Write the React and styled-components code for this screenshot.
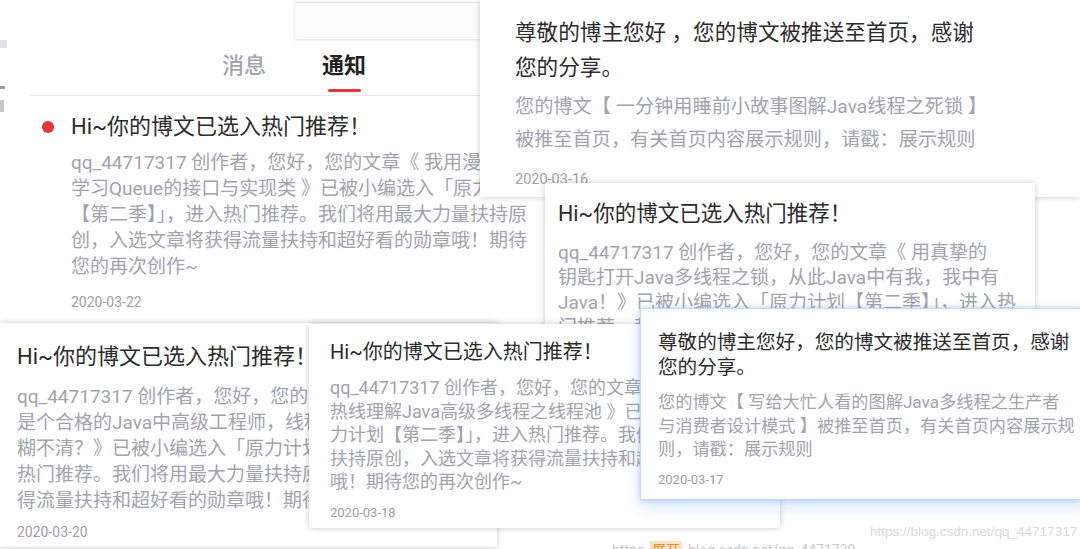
import React from 'react';
import styled, { createGlobalStyle } from 'styled-components';

const GlobalStyle = createGlobalStyle`
  html, body {
    margin: 0;
    padding: 0;
    background: #fff;
  }
  body {
    font-family: Roboto, "Noto Sans CJK SC", "Noto Sans", sans-serif;
    -webkit-font-smoothing: antialiased;
  }
`;

const Canvas = styled.div`
  position: relative;
  width: 1080px;
  height: 549px;
  overflow: hidden;
  background: #fff;
`;

// each screenshot piece sits at its own spot in the collage
const Card = styled.div`
  position: absolute;
  left: ${(p) => p.$x}px;
  top: ${(p) => p.$y}px;
  width: ${(p) => p.$w}px;
  height: ${(p) => p.$h}px;
  z-index: ${(p) => p.$z};
  box-sizing: border-box;
  display: flex;
  flex-direction: column;
  padding: ${(p) => p.$pad};
  background: #fff;
  overflow: hidden;
  border: ${(p) => (p.$glow ? '1px solid #c3d9f6' : 'none')};
  box-shadow: ${(p) =>
    p.$flat
      ? 'none'
      : p.$glow
      ? '0 0 5px rgba(90, 150, 230, 0.45), 0 8px 14px rgba(90, 150, 230, 0.22)'
      : '0 0 6px rgba(0, 0, 0, 0.22)'};
`;

const BackSheet = styled.div`
  position: absolute;
  left: 295px;
  top: 2px;
  width: 250px;
  height: 36px;
  z-index: 1;
  background: #fcfcfc;
  border-top: 1px solid #e2e2e2;
  box-shadow: 0 1px 3px rgba(0, 0, 0, 0.12);
`;

const EdgeMark = styled.div`
  position: absolute;
  left: 0;
  top: ${(p) => p.$y}px;
  width: ${(p) => p.$w}px;
  height: ${(p) => p.$h}px;
  background: ${(p) => p.$color};
`;

const TopStrip = styled.div`
  height: 38px;
  flex-shrink: 0;
`;

const Tabs = styled.div`
  display: flex;
  align-items: flex-start;
  gap: 56px;
  height: 58px;
  box-sizing: border-box;
  padding: 13px 0 0 192px;
  border-bottom: 1px solid #e9e9eb;
  flex-shrink: 0;
`;

const Tab = styled.div`
  display: flex;
  flex-direction: column;
  align-items: center;
  font-size: 22px;
  line-height: 30px;
  font-weight: ${(p) => (p.$active ? 700 : 500)};
  color: ${(p) => (p.$active ? '#222' : '#a3a4b0')};
`;

const Underline = styled.div`
  width: 33px;
  height: 3px;
  margin-top: 8px;
  border-radius: 2px;
  background: ${(p) => (p.$active ? '#e8343a' : 'transparent')};
`;

const NoticeRow = styled.div`
  display: flex;
  gap: 17px;
  padding: 16px 0 0 12px;
`;

const Dot = styled.div`
  width: 12px;
  height: 12px;
  margin-top: 9px;
  border-radius: 50%;
  background: #e8343a;
  flex-shrink: 0;
`;

const Content = styled.div`
  display: flex;
  flex-direction: column;
`;

const Title = styled.div`
  font-size: ${(p) => p.$size}px;
  line-height: ${(p) => p.$lh}px;
  color: #2b2b2b;
  white-space: nowrap;
`;

const Body = styled.div`
  margin-top: ${(p) => p.$gap}px;
  font-size: ${(p) => p.$size}px;
  line-height: ${(p) => p.$lh}px;
  color: #a2a3ae;
  white-space: nowrap;
`;

const Line = styled.div``;

const DateText = styled.div`
  margin-top: ${(p) => p.$gap}px;
  font-size: ${(p) => p.$size}px;
  line-height: ${(p) => p.$lh}px;
  color: #a0a0a4;
`;

const Watermark = styled.div`
  position: absolute;
  left: 870px;
  top: 524px;
  z-index: 6;
  font-family: "Liberation Sans", Arial, sans-serif;
  font-size: 13.5px;
  color: #dadada;
  white-space: nowrap;
`;

const PeekRow = styled.div`
  position: absolute;
  left: 612px;
  top: 541px;
  display: flex;
  align-items: center;
  gap: 6px;
  font-size: 14px;
  line-height: 18px;
  color: #c9c9cc;
  white-space: nowrap;
`;

const Expand = styled.span`
  color: #f08a24;
  background: #fde3c4;
  padding: 0 2px;
`;

const Lines = ({ lines }) => lines.map((l, i) => <Line key={i}>{l}</Line>);

const hotTitle = 'Hi~你的博文已选入热门推荐！';

export default function App() {
  return (
    <Canvas>
      <GlobalStyle />

      <EdgeMark $y={40} $w={7} $h={8} $color="#e2e2e4" />
      <EdgeMark $y={86} $w={5} $h={3} $color="#9a9aa0" />
      <EdgeMark $y={100} $w={4} $h={12} $color="#c8c8cc" />

      <Card $x={30} $y={0} $w={515} $h={323} $z={0} $pad="0" $flat>
        <TopStrip />
        <Tabs>
          <Tab>
            消息
            <Underline />
          </Tab>
          <Tab $active>
            通知
            <Underline $active />
          </Tab>
        </Tabs>
        <NoticeRow>
          <Dot />
          <Content>
            <Title $size={22} $lh={30}>{hotTitle}</Title>
            <Body $gap={8} $size={19} $lh={26}>
              <Lines
                lines={[
                  'qq_44717317 创作者，您好，您的文章《 我用漫画',
                  '学习Queue的接口与实现类 》已被小编选入「原力计划',
                  '【第二季】」，进入热门推荐。我们将用最大力量扶持原',
                  '创，入选文章将获得流量扶持和超好看的勋章哦！期待',
                  '您的再次创作~',
                ]}
              />
            </Body>
            <DateText $gap={12} $size={14} $lh={20}>2020-03-22</DateText>
          </Content>
        </NoticeRow>
      </Card>

      <BackSheet />

      <Card $x={480} $y={0} $w={600} $h={197} $z={2} $pad="15px 0 0 35px">
        <Title $size={21.6} $lh={35}>
          <Lines lines={['尊敬的博主您好 ，您的博文被推送至首页，感谢', '您的分享。']} />
        </Title>
        <Body $gap={5} $size={19.2} $lh={33}>
          <Lines
            lines={[
              '您的博文【 一分钟用睡前小故事图解Java线程之死锁 】',
              '被推至首页，有关首页内容展示规则，请戳：展示规则',
            ]}
          />
        </Body>
        <DateText $gap={13} $size={14.5} $lh={22}>2020-03-16</DateText>
      </Card>

      <Card $x={545} $y={183} $w={490} $h={170} $z={3} $pad="17px 0 0 13px">
        <Title $size={21.5} $lh={28}>{hotTitle}</Title>
        <Body $gap={12} $size={19} $lh={25}>
          <Lines
            lines={[
              'qq_44717317 创作者，您好，您的文章《 用真挚的',
              '钥匙打开Java多线程之锁，从此Java中有我，我中有',
              'Java！》已被小编选入「原力计划【第二季】」，进入热',
              '门推荐，我们将用最大力量扶持原创，入选文章将获得',
            ]}
          />
        </Body>
      </Card>

      <Card $x={0} $y={323} $w={497} $h={224} $z={2} $pad="19px 0 0 17px">
        <Title $size={22} $lh={30}>{hotTitle}</Title>
        <Body $gap={12} $size={19} $lh={26}>
          <Lines
            lines={[
              'qq_44717317 创作者，您好，您的文章《 如果你',
              '是个合格的Java中高级工程师，线程池的知识你还模',
              '糊不清？》已被小编选入「原力计划【第二季】」，进入',
              '热门推荐。我们将用最大力量扶持原创，入选文章将获',
              '得流量扶持和超好看的勋章哦！期待您的再次创作~',
            ]}
          />
        </Body>
        <DateText $gap={8} $size={14} $lh={20}>2020-03-20</DateText>
      </Card>

      <PeekRow>
        <span>https</span>
        <Expand>展开</Expand>
        <span>blog.csdn.net/qq_4471730</span>
      </PeekRow>

      <Card $x={309} $y={324} $w={471} $h={204} $z={3} $pad="14px 0 0 21px">
        <Title $size={20} $lh={28}>{hotTitle}</Title>
        <Body $gap={10} $size={18} $lh={23.5}>
          <Lines
            lines={[
              'qq_44717317 创作者，您好，您的文章《 从冷线到',
              '热线理解Java高级多线程之线程池 》已被小编选入「原',
              '力计划【第二季】」，进入热门推荐。我们将用最大力量',
              '扶持原创，入选文章将获得流量扶持和超好看的勋章',
              '哦！期待您的再次创作~',
            ]}
          />
        </Body>
        <DateText $gap={10.5} $size={13} $lh={18}>2020-03-18</DateText>
      </Card>

      <Card $x={640} $y={308} $w={445} $h={192} $z={4} $pad="20.5px 0 0 17px" $glow>
        <Title $size={19.6} $lh={25}>
          <Lines lines={['尊敬的博主您好，您的博文被推送至首页，感谢', '您的分享。']} />
        </Title>
        <Body $gap={11.5} $size={17.2} $lh={23.5}>
          <Lines
            lines={[
              '您的博文【 写给大忙人看的图解Java多线程之生产者',
              '与消费者设计模式 】被推至首页，有关首页内容展示规',
              '则，请戳：展示规则',
            ]}
          />
        </Body>
        <DateText $gap={9} $size={13} $lh={18}>2020-03-17</DateText>
      </Card>

      <Watermark>https://blog.csdn.net/qq_44717317</Watermark>
    </Canvas>
  );
}
